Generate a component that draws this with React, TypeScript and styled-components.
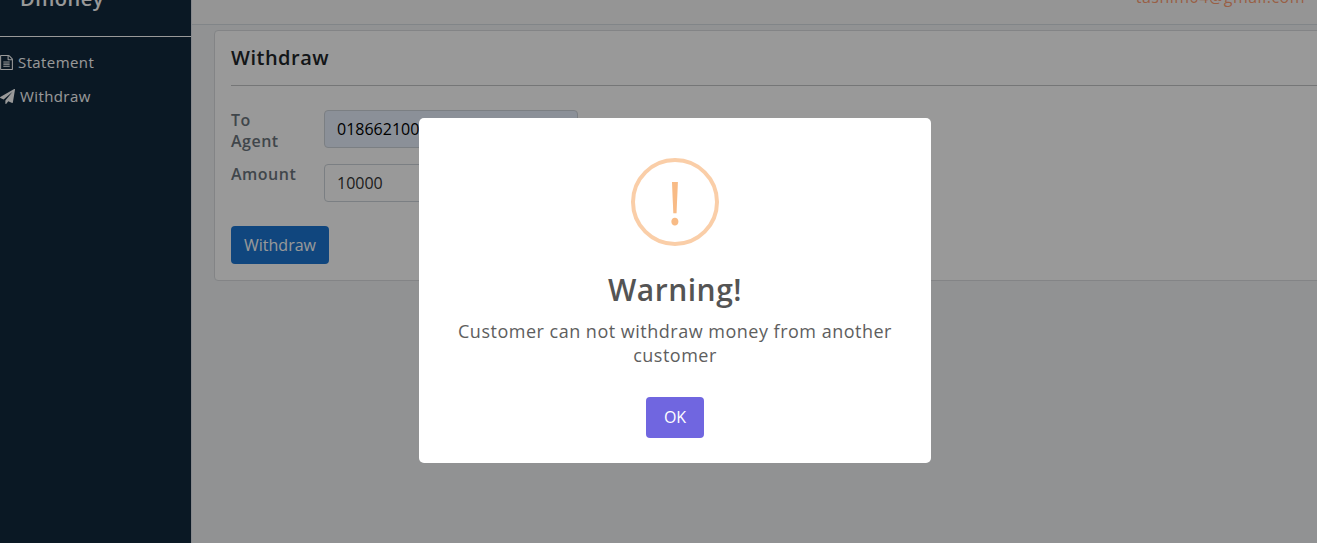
import React from 'react';
import styled, { createGlobalStyle } from 'styled-components';

const GlobalStyle = createGlobalStyle`
  *, *::before, *::after { box-sizing: border-box; }
  body {
    margin: 0;
    overflow: hidden;
    font-family: 'Open Sans', 'Noto Sans', sans-serif;
    font-size: 16px;
    line-height: 1.5;
    background: #f2f4f6;
  }
`;

const Page = styled.div`
  display: flex;
  height: 543px;
  overflow: hidden;
`;

const Sidebar = styled.aside`
  flex: 0 0 191px;
  background: #11283c;
  color: #fff;
`;

const Brand = styled.div`
  height: 37px;
  padding-left: 20px;
  border-bottom: 1px solid #fff;
  overflow: hidden;
  font-size: 20px;
  font-weight: 600;
  line-height: 30px;
  letter-spacing: 0.5px;

  span {
    display: block;
    margin-top: -16px;
  }
`;

const Nav = styled.nav`
  padding-top: 8px;
`;

const NavItem = styled.a`
  display: flex;
  align-items: center;
  gap: 5px;
  height: 34px;
  font-size: 15px;
  font-weight: 500;
  letter-spacing: 0.4px;
`;

const NavIcon = styled.svg`
  flex: none;
  height: 15px;
  fill: currentColor;
`;

const Main = styled.main`
  flex: 1;
  min-width: 0;
  border-left: 1px solid #dfe3e9;
`;

const TopBar = styled.header`
  height: 25px;
  padding-right: 12px;
  overflow: hidden;
  text-align: right;
  background: #f9f9f9;
  border-bottom: 1px solid #d8dee3;
  color: #ff9f73;
  letter-spacing: 0.5px;
  line-height: 24px;

  span {
    display: block;
    margin-top: -15px;
  }
`;

const Card = styled.section`
  width: 1120px;
  height: 251px;
  margin: 5px 0 0 22px;
  padding: 15px 16px;
  background: #fff;
  border: 1px solid #dadde0;
  border-radius: 4px;
`;

const CardTitle = styled.h2`
  margin: 0 0 24px;
  height: 40px;
  border-bottom: 1px solid #c4c5c7;
  color: #212529;
  font-size: 20px;
  font-weight: 600;
  line-height: 24px;
  letter-spacing: 0.5px;
`;

const Field = styled.div`
  display: flex;
  height: 38px;
  margin-bottom: 16px;
`;

const Label = styled.label`
  width: 93px;
  padding-right: 30px;
  color: #6c757d;
  font-weight: 600;
  line-height: 21px;
  letter-spacing: 0.5px;
`;

const Input = styled.input<{ $filled?: boolean }>`
  width: 254px;
  height: 38px;
  padding: 6px 12px;
  border: 1px solid #ced4da;
  border-radius: 4px;
  background: ${(p) => (p.$filled ? '#e8f0fe' : '#fff')};
  color: ${(p) => (p.$filled ? '#000' : '#333')};
  font: inherit;
`;

const SubmitButton = styled.button`
  display: block;
  width: 98px;
  height: 38px;
  margin-top: 24px;
  padding: 0;
  border: 0;
  border-radius: 4px;
  background: #1b76d2;
  color: #fff;
  font: inherit;
`;

const Backdrop = styled.div`
  position: fixed;
  top: 0;
  left: 0;
  display: flex;
  align-items: center;
  justify-content: center;
  width: 1350px;
  height: 581px;
  background: rgba(0, 0, 0, 0.4);
`;

const Dialog = styled.div`
  display: flex;
  flex-direction: column;
  align-items: center;
  width: 512px;
  height: 345px;
  padding-top: 40px;
  border-radius: 5px;
  background: #fff;
  text-align: center;
`;

const WarningIcon = styled.div`
  display: flex;
  align-items: center;
  justify-content: center;
  width: 88px;
  height: 88px;
  border: 4px solid #facea8;
  border-radius: 50%;
  color: #f8bb86;
  font-size: 60px;
  line-height: 80px;
`;

const DialogTitle = styled.h1`
  margin: 21px 0 0;
  color: #545454;
  font-size: 30px;
  font-weight: 600;
  line-height: 45px;
  letter-spacing: 0.5px;
`;

const Message = styled.p`
  width: 472px;
  margin: 7px 0 0;
  color: #5e5e5e;
  font-size: 18px;
  line-height: 24px;
  letter-spacing: 0.5px;
`;

const OkButton = styled.button`
  width: 58px;
  height: 41px;
  margin-top: 30px;
  padding: 0 0 2px;
  border: 0;
  border-radius: 4px;
  background: #7066e0;
  color: #fff;
  font: inherit;
`;

function DocumentIcon() {
  return (
    <NavIcon viewBox="0 0 1536 1792" width="13">
      <path d="M1468 380q28 28 48 76t20 88v1152q0 40-28 68t-68 28h-1344q-40 0-68-28t-28-68v-1600q0-40 28-68t68-28h896q40 0 88 20t76 48zM1024 136v376h376q-10-29-22-41l-313-313q-12-12-41-22zM1408 1664v-1024h-416q-40 0-68-28t-28-68v-416h-768v1536h1280zM384 800q0-14 9-23t23-9h704q14 0 23 9t9 23v64q0 14-9 23t-23 9h-704q-14 0-23-9t-9-23v-64zM1120 1024q14 0 23 9t9 23v64q0 14-9 23t-23 9h-704q-14 0-23-9t-9-23v-64q0-14 9-23t23-9h704zM1120 1280q14 0 23 9t9 23v64q0 14-9 23t-23 9h-704q-14 0-23-9t-9-23v-64q0-14 9-23t23-9h704z" />
    </NavIcon>
  );
}

function PlaneIcon() {
  return (
    <NavIcon viewBox="0 0 1792 1792" width="15">
      <path d="M1764 11q33 24 27 64l-256 1536q-5 29-32 45-14 8-31 8-11 0-24-5l-453-185-242 295q-18 23-49 23-13 0-22-4-19-7-30.5-23.5t-11.5-36.5v-349l864-1059-1069 925-395-162q-37-14-40-55-2-40 32-59l1664-960q15-9 32-9 20 0 36 11z" />
    </NavIcon>
  );
}

export default function App() {
  return (
    <>
      <GlobalStyle />
      <Page>
        <Sidebar>
          <Brand><span>Dmoney</span></Brand>
          <Nav>
            <NavItem><DocumentIcon />Statement</NavItem>
            <NavItem><PlaneIcon />Withdraw</NavItem>
          </Nav>
        </Sidebar>
        <Main>
          <TopBar><span>tasnim04@gmail.com</span></TopBar>
          <Card>
            <CardTitle>Withdraw</CardTitle>
            <Field>
              <Label>To Agent</Label>
              <Input $filled defaultValue="018662100" />
            </Field>
            <Field>
              <Label>Amount</Label>
              <Input defaultValue="10000" />
            </Field>
            <SubmitButton>Withdraw</SubmitButton>
          </Card>
        </Main>
      </Page>
      <Backdrop>
        <Dialog role="dialog">
          <WarningIcon>!</WarningIcon>
          <DialogTitle>Warning!</DialogTitle>
          <Message>Customer can not withdraw money from another customer</Message>
          <OkButton>OK</OkButton>
        </Dialog>
      </Backdrop>
    </>
  );
}
